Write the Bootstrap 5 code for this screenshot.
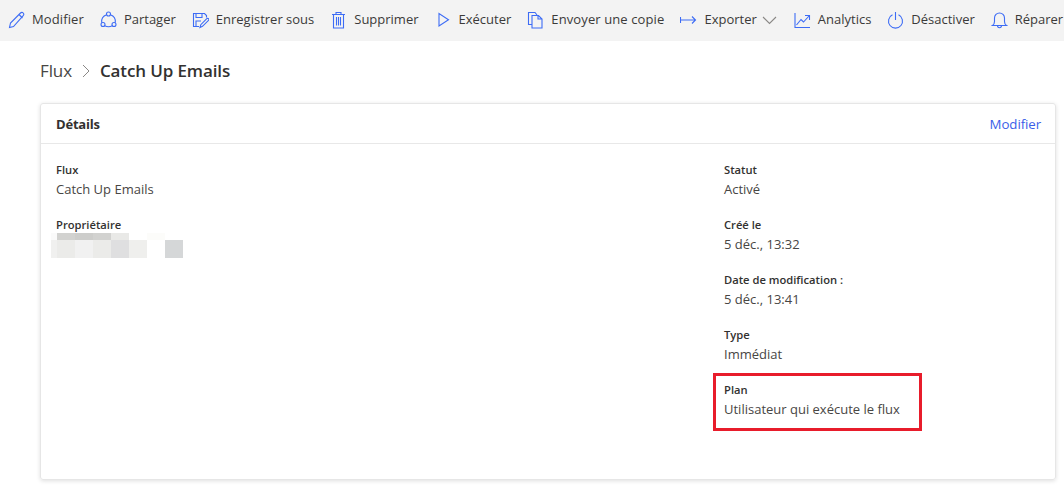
<!DOCTYPE html>
<html lang="fr">
<head>
<meta charset="utf-8">
<title>Catch Up Emails</title>
<link href="https://cdn.jsdelivr.net/npm/bootstrap@5.3.0/dist/css/bootstrap.min.css" rel="stylesheet">
<style>
html,body{height:486px;overflow:hidden;background:#fff}
body{font-family:"Open Sans","Noto Sans",sans-serif;color:#323130;font-size:13px}
.cmdbar{height:41px;background:#f3f3f3;white-space:nowrap;overflow:hidden;padding:0 0 1px 8px}
.cmd{display:flex;align-items:center;gap:7px;color:#3b3a39;font-size:13px;margin-right:16px;flex:none}
.cmd-wide{letter-spacing:.11px}
.cmd svg{width:17px;height:18px;flex:none;fill:none;stroke:#3d6cf5;stroke-width:1.1}
.crumbs{height:62px;padding:0 0 2px 40px;font-size:17px;letter-spacing:-.12px}
.crumbs .sep{width:8px;height:14px;margin:0 10px 0 10px;fill:none;stroke:#8a8886;stroke-width:1}
.crumbs b{font-weight:600;color:#323130}
.crumbs span{color:#484644}
.detail{margin:0 8px 0 40px;height:377px;border:1px solid #e6e6e6;border-radius:3px;box-shadow:0 1px 4px rgba(0,0,0,.13)}
.dhead{height:40px;padding:2px 14px 0 15px;border-bottom:1px solid #e8e8e8}
.dhead b{font-weight:700;font-size:13px;letter-spacing:-.2px}
.dhead a{color:#3b5fe8;text-decoration:none;font-size:13.3px;letter-spacing:-.1px}
.dbody{padding:17px 15px 0}
.leftcol{width:668px}
.fld{height:55px;line-height:19px}
.fld label{display:block;font-weight:600;font-size:11.2px;color:#323130;margin:0;line-height:18px}
.fld div{font-size:13px;color:#484644;line-height:20px}
.planbox{position:relative}
.planbox::after{content:"";position:absolute;left:-11px;top:-8px;width:209px;height:58px;border:3px solid #e81c2b}
.blur{display:grid;grid-template-columns:6px repeat(7,18px);grid-template-rows:7px 18px;margin-left:-5px;margin-top:-1px;width:132px}
.blur i{display:block}
</style>
</head>
<body>
<div class="cmdbar d-flex align-items-center">
  <div class="cmd cmd-wide"><svg viewBox="0 0 17 18"><path d="M1.500 16.500l1-4.500L12.500 2c.8-.8 2-.8 2.700 0s.7 1.900 0 2.600L5.500 15.500z M11 3.500l3.500 3.500"/></svg>Modifier</div>
  <div class="cmd"><svg viewBox="0 0 17 18"><circle cx="8.500" cy="3" r="2"/><circle cx="3" cy="13.500" r="2"/><circle cx="14" cy="13.500" r="2"/><path d="M6.600 3.700C3.300 4.800 1.200 7.800 1.700 11.800M10.400 3.700c3.300 1.100 5.400 4.100 4.900 8.100M4.700 14.700c2.300 1.300 5.300 1.300 7.600 0"/></svg>Partager</div>
  <div class="cmd"><svg viewBox="0 0 17 18"><path d="M7 15.500H1.500v-13h11l2 2v2M4 2.500v4h6v-4M4 15v-5h5"/><path d="M8 16.500l.8-2.800 6-6c.5-.5 1.300-.5 1.700 0s.4 1.200 0 1.600l-6 6z"/></svg>Enregistrer sous</div>
  <div class="cmd"><svg viewBox="0 0 17 18"><path d="M2 3.500h13M6 3.500V1.500h5v2M3.500 3.500V17h10V3.500M6.500 6v8.500M8.500 6v8.500M10.500 6v8.500"/></svg>Supprimer</div>
  <div class="cmd"><svg viewBox="0 0 17 18"><path d="M4 2.500v12.500l9.500-6.300z"/></svg>Exécuter</div>
  <div class="cmd cmd-wide"><svg viewBox="0 0 17 18"><path d="M5 13.500H1.500v-12h6.500l2 2.500M5 4.500h6.500L15 8v9H5z M11 4.500V8h4"/></svg>Envoyer une copie</div>
  <div class="cmd"><svg viewBox="0 0 17 18"><path d="M.5 6v6M.5 9h15M12 5.500L15.500 9 12 12.500"/></svg>Exporter<svg viewBox="0 0 17 18" style="stroke:#8a8886;margin-left:-3px"><path d="M2 6l6.500 6.500L15 6"/></svg></div>
  <div class="cmd"><svg viewBox="0 0 17 18"><path d="M1 2v14.500h15M2.500 14L7 8.500l2.500 2.500 5.500-6M11 4.500h4.500V9"/></svg>Analytics</div>
  <div class="cmd"><svg viewBox="0 0 17 18"><path d="M5.500 3.800a7 7 0 1 0 6 0M8.500 1v8"/></svg>Désactiver</div>
  <div class="cmd"><svg viewBox="0 0 17 18"><path d="M1.500 14.500c1.500-1 2-2 2-4V7a5 5 0 0 1 10 0v3.500c0 2 .5 3 2 4zM6.500 14.500c0 3 4 3 4 0"/></svg>Réparer</div>
</div>
<div class="crumbs d-flex align-items-center">
  <span>Flux</span><svg class="sep" viewBox="0 0 8 14"><path d="M1 1l6 6-6 6"/></svg><b>Catch Up Emails</b>
</div>
<div class="detail">
  <div class="dhead d-flex align-items-center justify-content-between"><b>Détails</b><a href="#">Modifier</a></div>
  <div class="dbody d-flex">
    <div class="leftcol">
      <div class="fld"><label>Flux</label><div>Catch Up Emails</div></div>
      <div class="fld"><label>Propriétaire</label>
        <div class="blur" aria-hidden="true">
          <i style="background:#fafafa"></i><i style="background:#d2d2d0"></i><i style="background:#cdcdcb"></i><i style="background:#d2d2d0"></i><i style="background:#e9e9e7"></i><i style="background:#fff"></i><i style="background:#fcfcfa"></i><i style="background:#fff"></i>
          <i style="background:#f0f0ef"></i><i style="background:#ebebe9"></i><i style="background:#f1f1f1"></i><i style="background:#ebebe9"></i><i style="background:#dfdfe0"></i><i style="background:#efefed"></i><i style="background:#fff"></i><i style="background:#d5d7d8"></i>
        </div>
      </div>
    </div>
    <div>
      <div class="fld"><label>Statut</label><div>Activé</div></div>
      <div class="fld"><label>Créé le</label><div>5 déc., 13:32</div></div>
      <div class="fld"><label>Date de modification :</label><div>5 déc., 13:41</div></div>
      <div class="fld"><label>Type</label><div>Immédiat</div></div>
      <div class="fld planbox"><label>Plan</label><div>Utilisateur qui exécute le flux</div></div>
    </div>
  </div>
</div>
<script src="https://cdn.jsdelivr.net/npm/bootstrap@5.3.0/dist/js/bootstrap.bundle.min.js"></script>
</body>
</html>
